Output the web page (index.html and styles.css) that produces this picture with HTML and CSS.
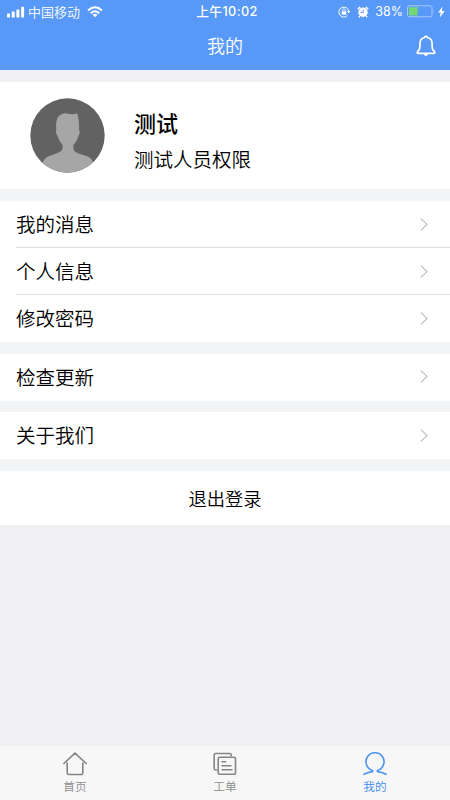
FILE: index.html
```html
<!DOCTYPE html>
<html lang="zh-CN">
<head>
<meta charset="utf-8">
<title>我的</title>
<link rel="stylesheet" href="styles.css">
</head>
<body>
<div class="app">
  <header class="header">
    <div class="status">
      <div class="status-left">
        <svg width="18" height="12" viewBox="0 0 18 12" fill="#fff"><rect x="0" y="7.5" width="3" height="4" rx=".6"/><rect x="4.7" y="5.5" width="3" height="6" rx=".6"/><rect x="9.4" y="3.4" width="3" height="8.1" rx=".6"/><rect x="14.1" y=".8" width="3" height="10.7" rx=".6"/></svg>
        <span class="carrier">中国移动</span>
        <svg class="wifi" width="16" height="12" viewBox="0 0 16 12" fill="none" stroke="#fff" stroke-width="2"><path d="M1 4.4Q8-1.8 15 4.4M3.7 7.2Q8 3.3 12.3 7.2"/><path d="M8 11.2 5.5 8.8Q8 6.8 10.5 8.8Z" fill="#fff" stroke="none"/></svg>
      </div>
      <span class="time">上午10:02</span>
      <div class="status-right">
        <svg width="12" height="12" viewBox="0 0 12 12" fill="none" stroke="#fff"><path d="M9.4 9.6A5 5 0 1 1 10.8 5.4"/><path d="M9.1 5h3.1l-1.5 2.4Z" fill="#fff" stroke="none"/><rect x="3.6" y="5.3" width="4.7" height="3.4" fill="#fff" stroke="none"/><path d="M4.6 5.4V4.3a1.4 1.4 0 0 1 2.8 0v1.1" stroke-width=".9"/></svg>
        <svg class="alarm" width="12" height="12" viewBox="0 0 12 12" fill="none"><circle cx="6" cy="6.3" r="4.7" fill="#fff"/><path d="M.8 3.1 3.2 1M11.2 3.1 8.8 1M2.8 10l-1 1.2M9.2 10l1 1.2" stroke="#fff" stroke-width="1.4"/><path d="M6.2 3.5v3.1H3.7" stroke="#5899f7"/></svg>
        <span class="percent">38%</span>
        <svg class="battery" width="28" height="13" viewBox="0 0 28 13"><rect x=".5" y=".8" width="24.5" height="11" rx="1.5" fill="none" stroke="#a5c8fa"/><rect x="2" y="2.2" width="8.6" height="8.2" fill="#76d672"/><path d="M26.2 4.3q1.5 2 0 4Z" fill="#a5c8fa"/></svg>
        <svg width="7" height="12" viewBox="0 0 7 12" fill="#fff"><path d="M4.5.5.2 6.6h2.5l-.9 4.9L6.7 4.9H3.9Z"/></svg>
      </div>
    </div>
    <div class="navbar">
      <h1>我的</h1>
      <svg class="bell" width="20" height="22" viewBox="0 0 20 22" fill="none" stroke="#fff" stroke-width="1.7" stroke-linejoin="round"><path d="M8.5 2.5Q10 .3 11.5 2.5C15 3.3 16.1 5.8 16.1 8.7V12C16.1 14.2 16.8 15.2 18.3 16.3Q19.2 18.3 18 18.3H2Q.8 18.3 1.7 16.3C3.2 15.2 3.9 14.2 3.9 12V8.7C3.9 5.8 5 3.3 8.5 2.5Z"/><path d="M8 19h4q-.3 2-2 2t-2-2Z" fill="#fff" stroke="none"/></svg>
    </div>
  </header>
  <section class="profile">
    <svg width="75" height="75" viewBox="0 0 75 75"><defs><clipPath id="face"><circle cx="37.5" cy="37.5" r="37.2"/></clipPath></defs><g clip-path="url(#face)"><path fill="#626262" d="M0 0h75v75H0z"/><path fill="#a6a6a6" d="M28 19Q31 15.5 36 15.3Q41 16.5 45 16L47.3 15.2L47.7 18Q49.3 22 49.1 32Q50.6 34 48.5 38Q47.2 43 43.5 47V51C44 55 54 57 58 58.5Q65 62 65 75H10Q11 62 18 58.5C23 56.5 32 54 32.5 51V47Q29 43 27.5 38Q25 34 26.3 32Q25.4 23 28 19Z"/></g></svg>
    <div class="person"><strong>测试</strong><span>测试人员权限</span></div>
  </section>
  <main class="groups">
    <ul class="group">
      <li><span>我的消息</span><svg class="arrow" viewBox="0 0 8 13"><path d="M.8.6 7 6.5.8 12.4"/></svg></li>
      <li><span>个人信息</span><svg class="arrow" viewBox="0 0 8 13"><path d="M.8.6 7 6.5.8 12.4"/></svg></li>
      <li><span>修改密码</span><svg class="arrow" viewBox="0 0 8 13"><path d="M.8.6 7 6.5.8 12.4"/></svg></li>
    </ul>
    <ul class="group">
      <li><span>检查更新</span><svg class="arrow" viewBox="0 0 8 13"><path d="M.8.6 7 6.5.8 12.4"/></svg></li>
    </ul>
    <ul class="group">
      <li><span>关于我们</span><svg class="arrow" viewBox="0 0 8 13"><path d="M.8.6 7 6.5.8 12.4"/></svg></li>
    </ul>
    <button class="logout">退出登录</button>
  </main>
  <nav class="tabs">
    <a class="tab"><svg width="24" height="24" viewBox="0 0 24 24"><path d="M.8 11.5 12 1.2l11.2 10.3M4.2 11v10q0 1.5 1.5 1.5h12.6q1.5 0 1.5-1.5V11"/></svg><span>首页</span></a>
    <a class="tab"><svg width="24" height="24" viewBox="0 0 24 24"><path d="M3.5 18H2.7Q1.2 18 1.2 16.5V3q0-1.5 1.5-1.5h14Q18.2 1.5 18.2 3v.8"/><rect x="5.2" y="5.2" width="17.3" height="17" rx="1.5"/><path d="M9 9.7h3.6M9 13.8h9M9 17.8h10"/></svg><span>工单</span></a>
    <a class="tab active"><svg width="24" height="24" viewBox="0 0 24 24"><path d="M1 22.3Q5 20 9.6 19.6V18.4A9 9 0 1 1 14.4 18.4V19.6Q19 20 23 22.3"/></svg><span>我的</span></a>
  </nav>
</div>
</body>
</html>
```
FILE: styles.css
```css
* { box-sizing: border-box; }
body {
  margin: 0;
  font-family: "Noto Sans CJK SC", sans-serif;
  font-weight: 350;
  color: #000;
}
svg { display: block; flex: none; }
.app {
  height: 800px;
  display: flex;
  flex-direction: column;
  background: #efeff4;
}
.header {
  height: 69.5px;
  flex: none;
  background: #5899f7;
  color: #fff;
}
.status {
  height: 22px;
  display: grid;
  grid-template-columns: 1fr auto 1fr;
  align-items: center;
  padding: 0 5px 0 7px;
  font-size: 13px;
  line-height: 22px;
}
.status-left, .status-right { display: flex; align-items: center; }
.status-right { justify-content: flex-end; }
.carrier { margin-left: 3px; }
.wifi { margin-left: 7px; }
.time {
  padding: 1px 0 0 2px;
  font-family: Inter, "Noto Sans CJK SC", sans-serif;
  font-size: 12.7px;
  font-weight: 500;
  letter-spacing: .4px;
}
.alarm { margin-left: 7px; }
.percent {
  margin-left: 6px;
  padding-top: 1px;
  font-family: Inter, sans-serif;
  font-size: 12.5px;
  font-weight: 400;
}
.battery { margin: 0 3px 0 4px; }
.navbar {
  height: 46px;
  display: grid;
  grid-template-columns: 1fr auto 1fr;
  align-items: center;
  padding: 0 14px;
}
h1 {
  grid-column: 2;
  margin: 0;
  font-size: 18px;
  font-weight: 350;
  line-height: 46px;
}
.bell { justify-self: end; margin-top: 2px; }
.profile {
  height: 107.5px;
  margin-top: 12px;
  padding-left: 29.5px;
  flex: none;
  display: flex;
  align-items: center;
  gap: 29.5px;
  background: #fff;
}
.person { display: flex; flex-direction: column; padding-top: 10px; }
.person strong { font-size: 22px; font-weight: 500; line-height: 36px; }
.person span { font-size: 19.5px; line-height: 37px; }
.groups {
  display: flex;
  flex-direction: column;
  gap: 11.6px;
  padding-top: 12px;
  background: #f2f3f5;
}
.group { margin: 0; padding: 0 0 0 16px; list-style: none; background: #fff; }
.group li {
  height: 47px;
  display: flex;
  align-items: center;
  justify-content: space-between;
  padding-right: 22px;
  font-size: 19.5px;
  line-height: 46px;
}
.group li:not(:last-child) { border-bottom: 1px solid #dedee0; }
.group li:last-child { padding-bottom: 1px; }
.arrow { width: 8px; height: 13px; fill: none; stroke: #c3c3c8; stroke-width: 1.3; }
.logout {
  height: 54px;
  padding: 0;
  border: 0;
  background: #fff;
  font: 350 18.3px "Noto Sans CJK SC", sans-serif;
  color: #000;
}
.tabs {
  height: 54px;
  margin-top: auto;
  display: grid;
  grid-template-columns: repeat(3, 1fr);
  background: #f7f7f7;
}
.tab {
  display: flex;
  flex-direction: column;
  align-items: center;
  padding-top: 6px;
  font-size: 11.7px;
  line-height: 20px;
  color: #8c8c8c;
}
.tab svg { fill: none; stroke: #858585; stroke-width: 1.6; stroke-linecap: round; stroke-linejoin: round; }
.tab.active { color: #3d8cf2; }
.tab.active svg { stroke: #4a93f3; }
```
